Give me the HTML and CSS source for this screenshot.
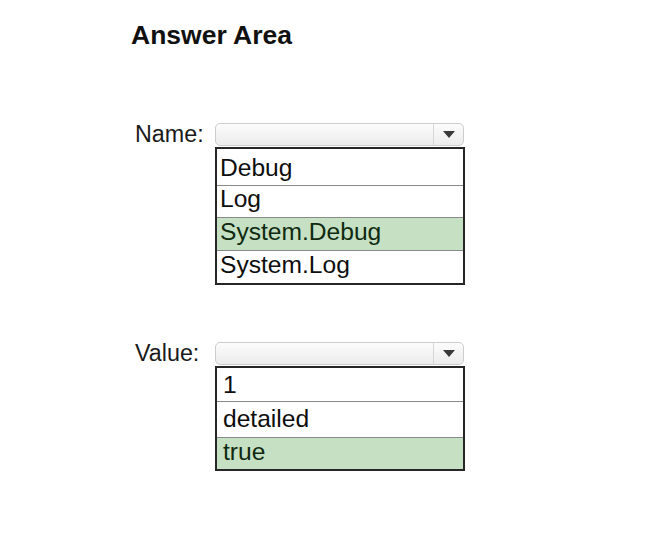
FILE: index.html
```html
<!DOCTYPE html>
<html lang="en">
<head>
<meta charset="utf-8">
<title>Answer Area</title>
<link rel="stylesheet" href="styles.css">
</head>
<body>
<div class="page">
  <h1 class="title">Answer Area</h1>

  <div class="field field-name">
    <span class="label">Name:</span>
    <div class="select">
      <span class="select-value"></span>
      <span class="select-btn">
        <svg width="12" height="7" viewBox="0 0 12 7"><path d="M0 0H12L6 7Z" fill="#3a3a3a"/></svg>
      </span>
    </div>
    <ul class="list">
      <li class="opt n1">Debug</li>
      <li class="opt n2">Log</li>
      <li class="opt n3 selected">System.Debug</li>
      <li class="opt n4">System.Log</li>
    </ul>
  </div>

  <div class="field field-value">
    <span class="label">Value:</span>
    <div class="select">
      <span class="select-value"></span>
      <span class="select-btn">
        <svg width="12" height="7" viewBox="0 0 12 7"><path d="M0 0H12L6 7Z" fill="#3a3a3a"/></svg>
      </span>
    </div>
    <ul class="list list-value">
      <li class="opt v1">1</li>
      <li class="opt v2">detailed</li>
      <li class="opt v3 selected">true</li>
    </ul>
  </div>
</div>
</body>
</html>
```

FILE: styles.css
```css
html, body {
  margin: 0;
  padding: 0;
  background: #ffffff;
}

body {
  font-family: "Liberation Sans", Arial, sans-serif;
  color: #141414;
}

.page {
  padding-top: 20px;
}

.title {
  margin: 0 0 0 131px;
  font-size: 26.5px;
  line-height: 30px;
  font-weight: bold;
  color: #111111;
}

.field {
  display: grid;
  grid-template-columns: 80px 250px;
  align-items: center;
  margin-left: 135px;
}

.field-name {
  margin-top: 72px;
}

.field-value {
  margin-top: 56px;
}

.label {
  font-size: 23.3px;
  line-height: 24px;
  color: #1a1a1a;
}

.select {
  display: flex;
  height: 21px;
  width: 247px;
  border: 1px solid #cdcdcd;
  border-radius: 5px;
  background: linear-gradient(#fcfcfc, #ececec);
}

.select-value {
  flex: 1;
}

.select-btn {
  width: 29px;
  border-left: 1px solid #d6d6d6;
  display: flex;
  align-items: center;
  justify-content: center;
}

.list {
  grid-column: 2;
  list-style: none;
  margin: 1px 0 0 0;
  padding: 0;
  width: 246px;
  border: 2px solid #262626;
}

.opt {
  font-size: 24.6px;
  line-height: 24px;
  padding-left: 3px;
  color: #0e0e0e;
  border-bottom: 1px solid #8a8a8a;
  box-sizing: border-box;
}

.list-value .opt {
  padding-left: 6px;
}

.opt:last-child {
  border-bottom: none;
}

.selected {
  background: #c5e0c3;
  color: #0f2a10;
}

.n1 { height: 37px; padding-top: 7px; }
.n2 { height: 32px; padding-top: 1px; }
.n3 { height: 33px; padding-top: 2px; }
.n4 { height: 32px; padding-top: 2px; }

.v1 { height: 34px; padding-top: 5px; }
.v2 { height: 36px; padding-top: 5px; }
.v3 { height: 31px; padding-top: 2px; }
```
